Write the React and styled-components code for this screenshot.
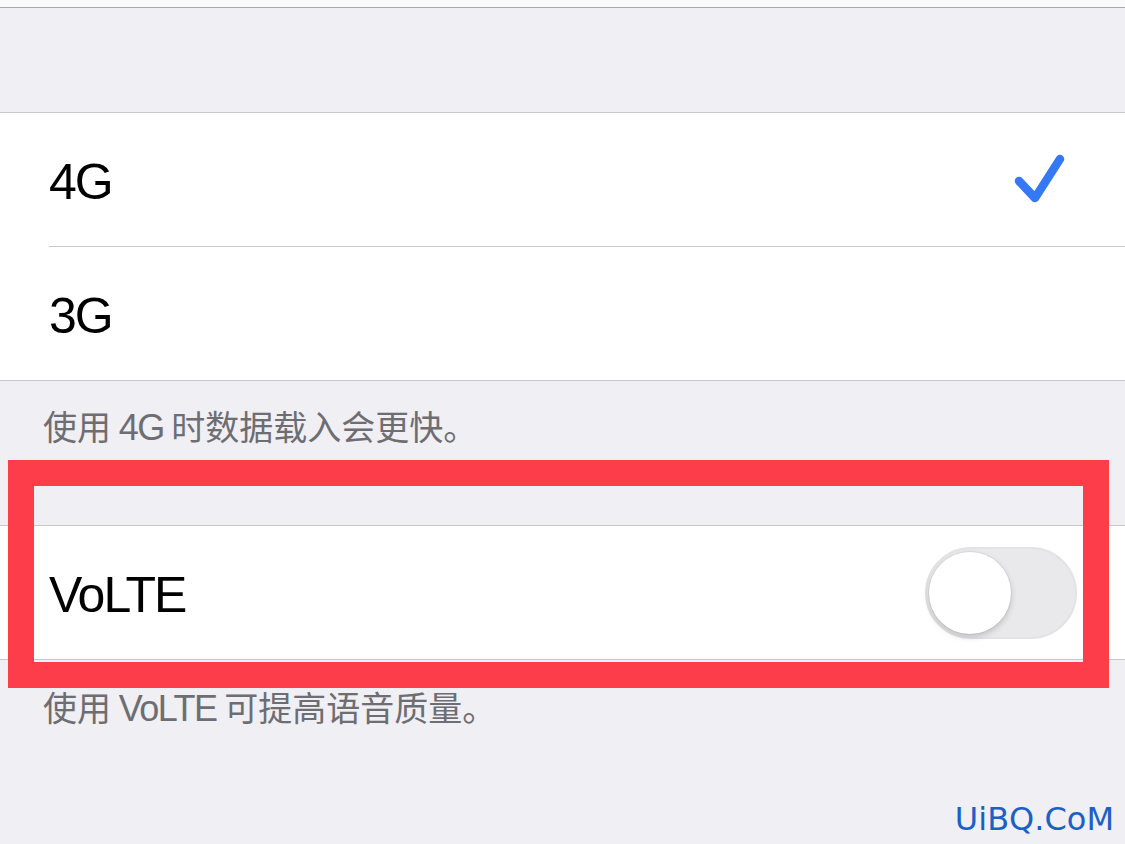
import React from 'react';
import styled, { createGlobalStyle } from 'styled-components';

const GlobalStyle = createGlobalStyle`
  html, body {
    margin: 0;
    padding: 0;
    background: #efeff4;
  }
  body {
    font-family: "Liberation Sans", "Noto Sans CJK SC", sans-serif;
  }
`;

const Screen = styled.div`
  position: relative;
  width: 1125px;
  height: 844px;
  overflow: hidden;
  background: #efeff4;
`;

const TopStrip = styled.div`
  height: 7px;
  background: #fafafc;
  border-bottom: 1px solid #a9a9ad;
`;

const Spacer = styled.div`
  height: ${(p) => p.h}px;
`;

const Group = styled.div`
  background: #ffffff;
  border-top: 1px solid #c8c7cc;
  border-bottom: 1px solid #c8c7cc;
`;

const Row = styled.div`
  height: 133px;
  display: flex;
  align-items: center;
  justify-content: space-between;
  margin-left: 49px;
  padding-right: 48px;
  border-bottom: ${(p) => (p.last ? 'none' : '1px solid #c8c7cc')};
`;

const Label = styled.span`
  font-size: 50px;
  letter-spacing: -2px;
  color: #000;
  margin-top: 4px;
`;

const Footer = styled.div`
  height: ${(p) => p.h}px;
  padding: ${(p) => p.top}px 0 0 43px;
  box-sizing: border-box;
  font-family: "Noto Sans CJK SC", sans-serif;
  font-size: 34px;
  line-height: 42px;
  color: #6d6d72;
`;

const Latin = styled.span`
  font-family: "Liberation Sans", sans-serif;
  font-size: 36px;
  letter-spacing: -1.5px;
`;

const CheckIcon = styled.svg`
  width: 52px;
  height: 52px;
  margin-right: 12px;
  margin-top: -4px;
`;

const Track = styled.div`
  position: relative;
  width: 152px;
  height: 92px;
  border-radius: 46px;
  background: #e9e9eb;
  box-sizing: border-box;
  border: 2px solid #e3e3e6;
`;

const Knob = styled.div`
  position: absolute;
  left: 2px;
  top: 3px;
  width: 82px;
  height: 82px;
  border-radius: 50%;
  background: #fff;
  box-shadow: 0 3px 6px rgba(0, 0, 0, 0.18), 0 0 0 1px rgba(0, 0, 0, 0.05);
`;

const Highlight = styled.div`
  position: absolute;
  left: 8px;
  top: 460px;
  width: 1101px;
  height: 228px;
  box-sizing: border-box;
  border: 26px solid #fd3e4a;
  pointer-events: none;
`;

const Watermark = styled.div`
  position: absolute;
  right: 11px;
  bottom: 6px;
  font-family: "DejaVu Sans", sans-serif;
  font-size: 32px;
  color: #1c60c6;
`;

const Check = () => (
  <CheckIcon viewBox="0 0 52 52">
    <path
      d="M6 29 L22 46 L47 7"
      fill="none"
      stroke="#3478f6"
      strokeWidth="8.5"
      strokeLinecap="round"
      strokeLinejoin="round"
    />
  </CheckIcon>
);

export default function App() {
  return (
    <>
      <GlobalStyle />
      <Screen>
        <TopStrip />
        <Spacer h={104} />
        <Group>
          <Row>
            <Label>4G</Label>
            <Check />
          </Row>
          <Row last>
            <Label>3G</Label>
          </Row>
        </Group>
        <Footer h={144} top={24}>
          使用 <Latin>4G</Latin> 时数据载入会更快。
        </Footer>
        <Group>
          <Row last>
            <Label>VoLTE</Label>
            <Track>
              <Knob />
            </Track>
          </Row>
        </Group>
        <Footer h={120} top={26}>
          使用 <Latin>VoLTE</Latin> 可提高语音质量。
        </Footer>
        <Highlight />
        <Watermark>UiBQ.CoM</Watermark>
      </Screen>
    </>
  );
}
